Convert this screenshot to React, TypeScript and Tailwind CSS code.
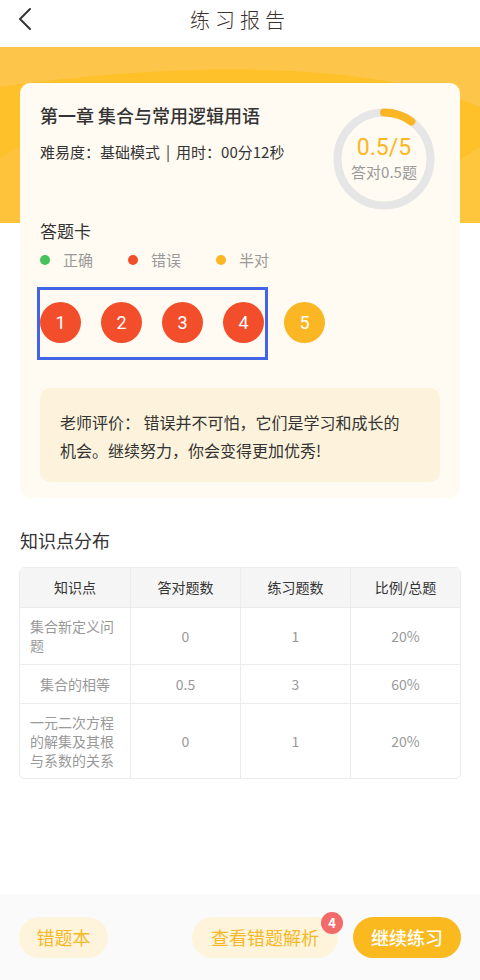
import React from 'react';

const font = { fontFamily: '"Noto Sans CJK SC", "Noto Sans", sans-serif' };
const digitFont = { fontFamily: 'Roboto, "Noto Sans CJK SC", sans-serif' };

type Status = 'wrong' | 'half' | 'right';

const answers: { n: number; status: Status }[] = [
  { n: 1, status: 'wrong' },
  { n: 2, status: 'wrong' },
  { n: 3, status: 'wrong' },
  { n: 4, status: 'wrong' },
  { n: 5, status: 'half' },
];

const statusBg: Record<Status, string> = {
  right: 'bg-[#45c25a]',
  wrong: 'bg-[#f24e2c]',
  half: 'bg-[#fbb624]',
};

const rows = [
  { name: '集合新定义问题', right: '0', total: '1', ratio: '20%', h: 'h-[57px]' },
  { name: '集合的相等', right: '0.5', total: '3', ratio: '60%', h: 'h-[39px]' },
  { name: '一元二次方程的解集及其根与系数的关系', right: '0', total: '1', ratio: '20%', h: 'h-[75px]' },
];

function ScoreRing() {
  // 0.5 / 5 => 10%
  const r = 46.5;
  const c = 2 * Math.PI * r;
  return (
    <div className="relative w-[102px] h-[102px] flex-none">
      <svg width="102" height="102" viewBox="0 0 102 102" className="absolute inset-0">
        <circle cx="51" cy="51" r={r} fill="none" stroke="#e6e6e6" strokeWidth="8" />
        <circle
          cx="51"
          cy="51"
          r={r}
          fill="none"
          stroke="#fbb624"
          strokeWidth="8"
          strokeLinecap="round"
          strokeDasharray={`${c * 0.1} ${c}`}
          transform="rotate(-90 51 51)"
        />
      </svg>
      <div className="absolute inset-0 flex flex-col items-center justify-center">
        <span className="text-[23px] leading-[26px] text-[#fbb624]" style={digitFont}>
          0.5/5
        </span>
        <span className="text-[15px] leading-[22px] text-[#999999]">答对0.5题</span>
      </div>
    </div>
  );
}

export default function App() {
  return (
    <div className="min-h-[980px] w-[480px] bg-white flex flex-col" style={font}>
      {/* 顶部导航 */}
      <header className="relative h-[47px] flex items-center justify-center flex-none">
        <svg
          className="absolute left-[16px] top-[7px]"
          width="18"
          height="24"
          viewBox="0 0 18 24"
          fill="none"
          stroke="#333"
          strokeWidth="2"
          strokeLinecap="round"
          strokeLinejoin="round"
        >
          <path d="M14 2 L4 12 L14 22" />
        </svg>
        <h1 className="text-[20px] font-light tracking-[5px] text-[#3a3030] mt-[-8px]">练习报告</h1>
      </header>

      <div className="relative">
        {/* 橙色背景 */}
        <div className="absolute left-0 right-0 top-0 h-[176px] bg-[#fdc12e] overflow-hidden">
          <svg className="absolute inset-0" width="480" height="176" viewBox="0 0 480 176" preserveAspectRatio="none">
            <path d="M0 0 H480 V60 C380 20 220 10 0 40 Z" fill="#fdc64a" />
            <path d="M0 40 C220 10 380 20 480 60 V176 H0 Z" fill="#fec12a" />
            <path d="M380 176 C430 140 460 110 480 100 V176 Z" fill="#fdc744" opacity="0.7" />
            <path d="M0 110 C20 100 30 90 40 80 V176 H0 Z" fill="#fdc64a" opacity="0.5" />
          </svg>
        </div>

        {/* 报告卡片 */}
        <section className="relative mx-[20px] mt-[36px] rounded-[10px] bg-[#fffbf2] px-[20px] pb-[16px]">
          <div className="flex justify-between">
            <div className="pt-[19px]">
              <h2 className="text-[18px] leading-[26px] font-medium text-[#333]">第一章 集合与常用逻辑用语</h2>
              <p className="mt-[14px] text-[15px] leading-[20px] text-[#333]">
                难易度：基础模式<span className="mx-[6px]">|</span>用时：00分12秒
              </p>
            </div>
            <div className="mt-[25px] mr-[5px]">
              <ScoreRing />
            </div>
          </div>

          <h3 className="mt-[9px] text-[17px] leading-[24px] text-[#333]">答题卡</h3>
          <div className="mt-[7px] flex items-center gap-[35px] h-[20px]">
            {[
              { label: '正确', c: 'bg-[#45c25a]' },
              { label: '错误', c: 'bg-[#f24e2c]' },
              { label: '半对', c: 'bg-[#fbb624]' },
            ].map((l) => (
              <div key={l.label} className="flex items-center gap-[13px]">
                <span className={`w-[10px] h-[10px] rounded-full ${l.c}`} />
                <span className="text-[15px] leading-[20px] text-[#999]">{l.label}</span>
              </div>
            ))}
          </div>

          <div className="relative mt-[32px] flex gap-[20px]">
            {answers.map((a) => (
              <div
                key={a.n}
                className={`w-[41px] h-[41px] rounded-full flex items-center justify-center text-white text-[18px] ${statusBg[a.status]}`}
                style={digitFont}
              >
                {a.n}
              </div>
            ))}
            {/* 标注框 */}
            <div className="absolute left-[-3px] top-[-15px] w-[231px] h-[73px] border-[3px] border-[#4264e6]" />
          </div>

          <div className="mt-[45px] rounded-[10px] bg-[#fdf3dc] pl-[20px] pr-[38px] pt-[20px] pb-[18px]">
            <p className="text-[16px] leading-[28px] text-[#333]">
              老师评价： 错误并不可怕，它们是学习和成长的机会。继续努力，你会变得更加优秀!
            </p>
          </div>
        </section>
      </div>

      {/* 知识点分布 */}
      <h2 className="mx-[20px] mt-[29px] text-[18px] leading-[26px] text-[#333]">知识点分布</h2>
      <div className="mx-[19px] mt-[14px] rounded-[6px] border border-[#ececec] overflow-hidden">
        <div className="grid grid-cols-4 h-[39px] bg-[#f5f5f5] text-[14px] text-[#333]">
          {['知识点', '答对题数', '练习题数', '比例/总题'].map((t, i) => (
            <div key={t} className={`flex items-center justify-center ${i > 0 ? 'border-l border-[#ececec]' : ''}`}>
              {t}
            </div>
          ))}
        </div>
        {rows.map((r) => (
          <div key={r.name} className={`grid grid-cols-4 border-t border-[#ececec] text-[14px] text-[#999] ${r.h}`}>
            <div className="flex items-center justify-center px-[10px]">
              <span className="leading-[19px] text-left">{r.name}</span>
            </div>
            <div className="flex items-center justify-center border-l border-[#ececec]">{r.right}</div>
            <div className="flex items-center justify-center border-l border-[#ececec]">{r.total}</div>
            <div className="flex items-center justify-center border-l border-[#ececec]">{r.ratio}</div>
          </div>
        ))}
      </div>

      {/* 底部操作栏 */}
      <footer className="mt-auto h-[86px] bg-[#fafafa] flex items-start justify-between px-[19px] pt-[23px]">
        <button className="h-[41px] w-[89px] rounded-full bg-[#fef4dc] text-[18px] text-[#f5b82a]">错题本</button>
        <div className="flex gap-[15px]">
          <button className="relative h-[41px] w-[146px] rounded-full bg-[#fef4dc] text-[18px] text-[#f5b82a]">
            查看错题解析
            <span className="absolute -right-[5px] -top-[5px] w-[22px] h-[22px] rounded-full bg-[#f26a6a] text-white text-[13px] font-bold flex items-center justify-center">
              4
            </span>
          </button>
          <button className="h-[41px] w-[108px] rounded-full bg-[#fbb920] text-[18px] font-medium text-white">继续练习</button>
        </div>
      </footer>
    </div>
  );
}
